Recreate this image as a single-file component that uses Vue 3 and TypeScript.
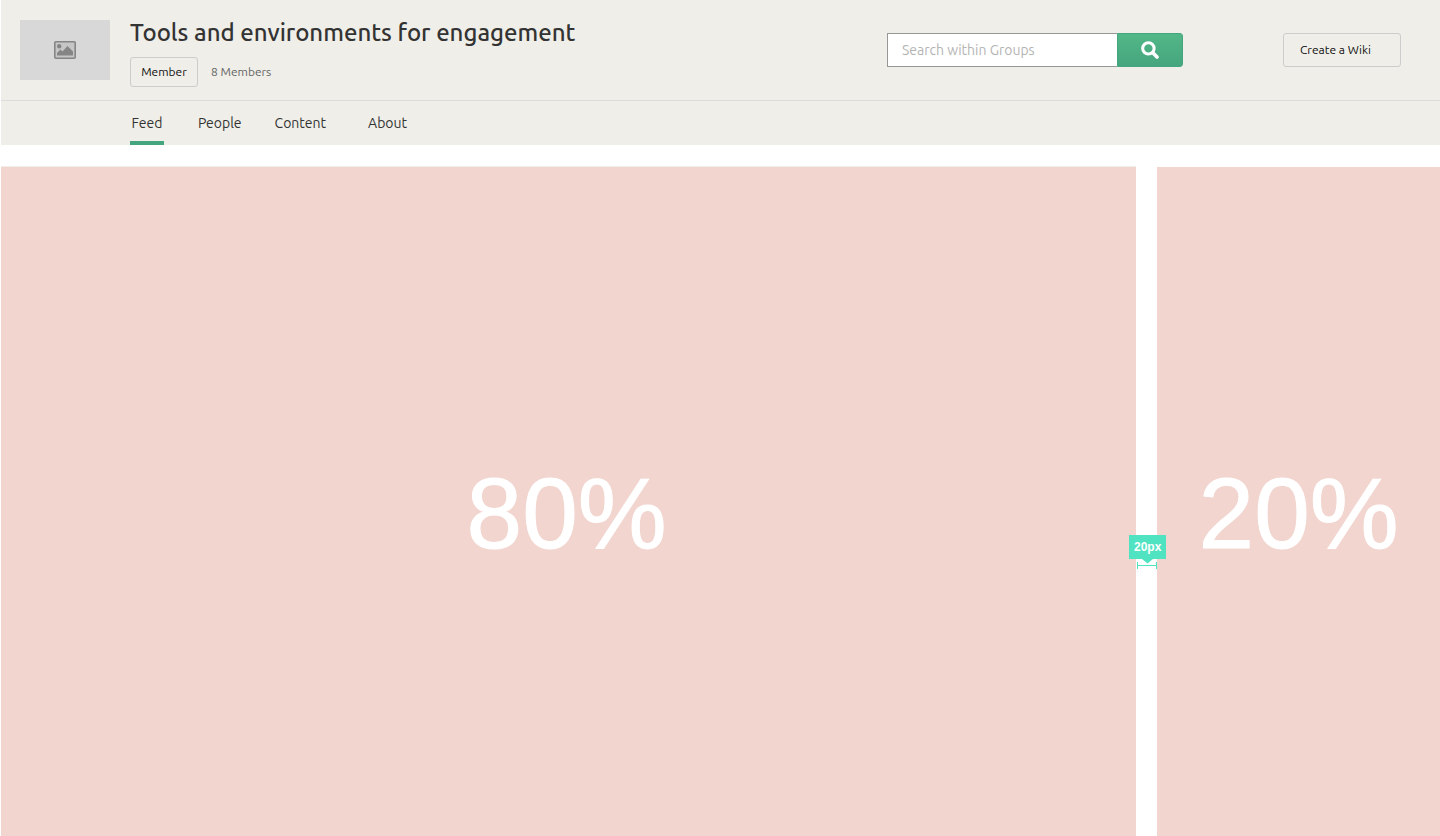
<script setup lang="ts">
import { ref } from 'vue'

interface Tab {
  id: string
  label: string
}

const tabs: Tab[] = [
  { id: 'feed', label: 'Feed' },
  { id: 'people', label: 'People' },
  { id: 'content', label: 'Content' },
  { id: 'about', label: 'About' },
]
const activeTab = ref('feed')
const query = ref('')
</script>

<template>
  <div class="page">
    <header class="group-header">
      <div class="banner">
        <div class="thumb">
          <svg width="22" height="18" viewBox="0 0 22 18" role="img" aria-label="Group picture">
            <rect x="0.8" y="0.8" width="20.4" height="16.4" rx="1" fill="#c6c6c6" stroke="#858585" stroke-width="1.6" />
            <circle cx="5.2" cy="5.2" r="2.2" fill="#858585" />
            <path d="M3 14.5V12L6.5 8.5L8.5 10.5L13.5 5L19 10.5V14.5Z" fill="#858585" />
          </svg>
        </div>
        <div class="identity">
          <h1>Tools and environments for engagement</h1>
          <div class="membership">
            <button type="button" class="outline member">Member</button>
            <span class="count">8 Members</span>
          </div>
        </div>
        <form class="search" role="search" @submit.prevent>
          <input v-model="query" type="text" placeholder="Search within Groups" aria-label="Search within Groups" />
          <button type="submit" aria-label="Search">
            <svg width="18" height="18" viewBox="0 0 18 18" fill="none" stroke="#fff" aria-hidden="true">
              <circle cx="7.4" cy="7.4" r="5.7" stroke-width="3" />
              <path d="M11.8 11.8L16 16" stroke-width="3.6" stroke-linecap="round" />
            </svg>
          </button>
        </form>
        <button type="button" class="outline create">Create a Wiki</button>
      </div>
      <nav class="tabs" aria-label="Group sections">
        <a
          v-for="tab in tabs"
          :key="tab.id"
          :href="`#${tab.id}`"
          :class="[tab.id, { active: tab.id === activeTab }]"
          @click="activeTab = tab.id"
        >{{ tab.label }}</a>
      </nav>
    </header>

    <main class="columns">
      <section class="column primary">
        80%
        <div class="measure">
          <span class="measure-label">20px</span>
          <svg width="20" height="12" viewBox="0 0 20 12" aria-hidden="true">
            <path d="M5 0H16L10.5 4.5Z" fill="#50e3c2" />
            <path d="M0.5 3V10M19.5 3V10M0 6.5H20" fill="none" stroke="#50e3c2" />
          </svg>
        </div>
      </section>
      <aside class="column">20%</aside>
    </main>
  </div>
</template>

<style>
body {
  background: #fff;
}
</style>

<style scoped>
.page {
  box-sizing: border-box;
  display: flex;
  flex-direction: column;
  min-height: 100vh;
  padding-left: 1px;
  color: #333;
  font-family: Ubuntu, "Noto Sans", "Open Sans", sans-serif;
}

.page *,
.page *::before {
  box-sizing: border-box;
}

.group-header {
  background: #efeee8;
}

.banner {
  display: flex;
  align-items: flex-start;
  height: 101px;
  padding: 0 39px 0 19px;
  border-bottom: 1px solid #dcdcdc;
}

.thumb {
  display: flex;
  align-items: center;
  justify-content: center;
  width: 90px;
  height: 60px;
  margin: 20px 20px 0 0;
  background: #d8d8d8;
}

.identity {
  flex: 1;
  padding-top: 17px;
}

h1 {
  margin: 0;
  font-size: 24px;
  font-weight: 500;
  line-height: 32px;
  white-space: nowrap;
}

.membership {
  display: flex;
  align-items: center;
  gap: 13px;
  margin-top: 8px;
}

.outline {
  padding: 0 0 2px;
  border: 1px solid #ccc;
  border-radius: 3px;
  background: transparent;
  color: #111;
  font-family: inherit;
  font-size: 12px;
}

.member {
  width: 68px;
  height: 30px;
}

.count {
  padding-bottom: 2px;
  color: #666;
  font-size: 12px;
}

.search {
  display: flex;
  width: 296px;
  height: 34px;
  margin: 33px 100px 0 0;
}

.search input {
  flex: 1;
  min-width: 0;
  padding: 0 14px;
  border: 1px solid #979797;
  border-right: 0;
  border-radius: 0;
  background: #fff;
  color: #333;
  font-family: inherit;
  font-size: 14px;
}

.search input::placeholder {
  color: #b4b4b4;
  opacity: 1;
}

.search button {
  display: flex;
  align-items: center;
  justify-content: center;
  width: 66px;
  padding: 0;
  border: 1px solid #43a67e;
  border-radius: 0 3px 3px 0;
  background: linear-gradient(#52b788, #46a57e);
}

.create {
  width: 118px;
  height: 34px;
  margin-top: 33px;
  padding-left: 16px;
  text-align: left;
}

.tabs {
  display: flex;
  height: 44px;
  padding-left: 129px;
}

.tabs a {
  border-bottom: 4px solid transparent;
  color: #333;
  font-size: 14px;
  line-height: 44px;
  text-align: center;
  text-decoration: none;
}

.tabs .active {
  border-bottom-color: #43a67e;
}

.feed {
  width: 34px;
}

.people {
  margin-left: 34px;
}

.content {
  margin-left: 33px;
}

.about {
  margin-left: 42px;
}

.columns {
  flex: 1;
  display: grid;
  grid-template-columns: 1fr calc(20% - 5px);
  gap: 21px;
  padding-top: 21px;
}

.column {
  position: relative;
  display: flex;
  align-items: center;
  justify-content: center;
  padding-top: 22px;
  border-top: 1px solid #fff;
  background: #f2d5cf;
  background-clip: padding-box;
  color: #fff;
  font-family: "Liberation Sans", Arial, sans-serif;
  font-size: 100px;
  line-height: 112px;
  -webkit-text-stroke: 1px #fff;
}

.primary {
  z-index: 1;
  padding-right: 4px;
  border-top-color: #efeee8;
}

/* Dimension marker that straddles the gutter between the columns. */
.measure {
  position: absolute;
  top: 55%;
  right: -30px;
  display: flex;
  flex-direction: column;
  width: 37px;
  -webkit-text-stroke: 0;
}

.measure svg {
  margin-left: 8px;
}

.measure-label {
  background: #50e3c2;
  font-size: 12px;
  font-weight: 700;
  line-height: 24px;
  text-align: center;
}
</style>
